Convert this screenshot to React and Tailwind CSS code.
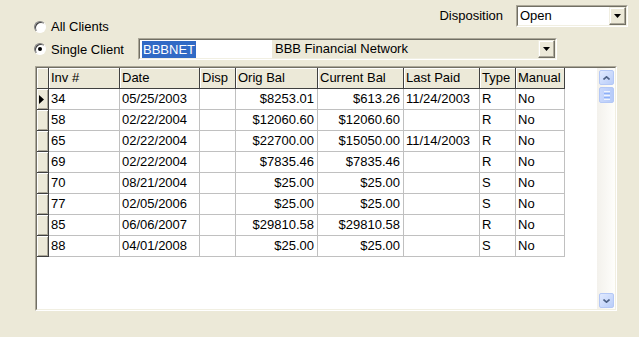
import React from 'react'

const cols = [
  { key: 'inv', label: 'Inv #', w: 'w-[71px]', align: 'left' },
  { key: 'date', label: 'Date', w: 'w-[80px]', align: 'left' },
  { key: 'disp', label: 'Disp', w: 'w-[36px]', align: 'left' },
  { key: 'orig', label: 'Orig Bal', w: 'w-[82px]', align: 'right' },
  { key: 'cur', label: 'Current Bal', w: 'w-[86px]', align: 'right' },
  { key: 'paid', label: 'Last Paid', w: 'w-[76px]', align: 'left' },
  { key: 'type', label: 'Type', w: 'w-[36px]', align: 'left' },
  { key: 'manual', label: 'Manual', w: 'w-[49px]', align: 'left' },
]

const rows = [
  { inv: '34', date: '05/25/2003', disp: '', orig: '$8253.01', cur: '$613.26', paid: '11/24/2003', type: 'R', manual: 'No' },
  { inv: '58', date: '02/22/2004', disp: '', orig: '$12060.60', cur: '$12060.60', paid: '', type: 'R', manual: 'No' },
  { inv: '65', date: '02/22/2004', disp: '', orig: '$22700.00', cur: '$15050.00', paid: '11/14/2003', type: 'R', manual: 'No' },
  { inv: '69', date: '02/22/2004', disp: '', orig: '$7835.46', cur: '$7835.46', paid: '', type: 'R', manual: 'No' },
  { inv: '70', date: '08/21/2004', disp: '', orig: '$25.00', cur: '$25.00', paid: '', type: 'S', manual: 'No' },
  { inv: '77', date: '02/05/2006', disp: '', orig: '$25.00', cur: '$25.00', paid: '', type: 'S', manual: 'No' },
  { inv: '85', date: '06/06/2007', disp: '', orig: '$29810.58', cur: '$29810.58', paid: '', type: 'R', manual: 'No' },
  { inv: '88', date: '04/01/2008', disp: '', orig: '$25.00', cur: '$25.00', paid: '', type: 'S', manual: 'No' },
]

function Radio({ checked, label }) {
  return (
    <div className="flex items-center h-[13px]">
      <div className="w-[12px] h-[12px] rounded-full border border-t-[#808080] border-l-[#808080] border-r-white border-b-white bg-white flex items-center justify-center shadow-[inset_1px_1px_0_#404040]">
        {checked && <div className="w-[4px] h-[4px] rounded-full bg-black" />}
      </div>
      <span className="ml-[5px] leading-[13px]">{label}</span>
    </div>
  )
}

// classic raised dropdown button
function DropBtn() {
  return (
    <div className="w-[17px] h-[18px] bg-[#ECE9D8] border border-t-[#F1EFE2] border-l-[#F1EFE2] border-r-[#716F64] border-b-[#716F64] shadow-[inset_-1px_-1px_0_#ACA899,inset_1px_1px_0_#fff] flex items-center justify-center">
      <svg width="7" height="4" viewBox="0 0 7 4">
        <path d="M0 0h7L3.5 4z" fill="#000" />
      </svg>
    </div>
  )
}

function Sunken({ className, children }) {
  return (
    <div className={`border border-t-[#ACA899] border-l-[#ACA899] border-r-white border-b-white ${className}`}>
      <div className="w-full h-full border border-t-[#716F64] border-l-[#716F64] border-r-[#F1EFE2] border-b-[#F1EFE2]">
        {children}
      </div>
    </div>
  )
}

function ScrollBtn({ dir }) {
  return (
    <div className="w-[15px] h-[15px] rounded-[2px] border border-[#B4C8F6] bg-gradient-to-br from-[#E1EAFE] to-[#B9CDF9] flex items-center justify-center">
      <svg width="7" height="4" viewBox="0 0 7 4">
        {dir === 'up'
          ? <path d="M0.5 3.5L3.5 0.8L6.5 3.5" stroke="#4D6185" strokeWidth="1.6" fill="none" />
          : <path d="M0.5 0.5L3.5 3.2L6.5 0.5" stroke="#4D6185" strokeWidth="1.6" fill="none" />}
      </svg>
    </div>
  )
}

export default function App() {
  return (
    <div className="w-[639px] h-[337px] bg-[#ECE9D8] text-black text-[13px] pt-[5px] overflow-hidden" style={{ fontFamily: '"Liberation Sans", Arial, sans-serif' }}>
      {/* top row: All Clients + Disposition */}
      <div className="flex h-[28px]">
        <div className="self-end pl-[34px]">
          <Radio label="All Clients" />
        </div>
        <div className="ml-auto flex items-center h-[22px] pr-[11px]">
          <span className="mr-[13px]">Disposition</span>
          <Sunken className="w-[112px] h-[22px] bg-white">
            <div className="flex items-center h-full bg-white">
              <span className="pl-[2px] flex-1">Open</span>
              <DropBtn />
            </div>
          </Sunken>
        </div>
      </div>

      {/* single client row */}
      <div className="flex items-center h-[22px] mt-[5px]">
        <div className="pl-[34px] w-[138px]">
          <Radio checked label="Single Client" />
        </div>
        <Sunken className="w-[419px] h-[22px]">
          <div className="flex h-full">
            <div className="w-[132px] bg-white flex items-center pl-[2px]">
              <span className="bg-[#316AC5] text-white px-[1px] leading-[17px]">BBBNET</span>
            </div>
            <div className="flex-1 flex items-center pl-[3px] bg-[#ECE9D8]">BBB Financial Network</div>
            <DropBtn />
          </div>
        </Sunken>
      </div>

      {/* grid */}
      <Sunken className="ml-[35px] mt-[6px] w-[582px] h-[245px] bg-white">
        <div className="flex h-full bg-white">
          <div className="flex-1">
            {/* header */}
            <div className="flex h-[21px]">
              <div className="w-[12px] h-full bg-[#ECE9D8] border-r border-b border-[#404040] shadow-[inset_1px_1px_0_#fff]" />
              {cols.map((c) => (
                <div key={c.key} className={`${c.w} h-full bg-[#ECE9D8] border-r border-b border-[#404040] shadow-[inset_1px_1px_0_#fff] pl-[2px] leading-[20px] whitespace-nowrap overflow-hidden`}>
                  {c.label}
                </div>
              ))}
            </div>
            {rows.map((r, i) => (
              <div key={r.inv} className="flex h-[21px]">
                <div className="w-[12px] h-full bg-[#ECE9D8] border-r border-b border-[#404040] shadow-[inset_1px_1px_0_#fff,inset_-1px_-1px_0_#ACA899] flex items-center pl-[2px]">
                  {i === 0 && (
                    <svg width="5" height="9" viewBox="0 0 5 9">
                      <path d="M0 0L5 4.5L0 9z" fill="#000" />
                    </svg>
                  )}
                </div>
                {cols.map((c) => (
                  <div key={c.key} className={`${c.w} h-full border-r border-b border-[#C0C0C0] leading-[20px] whitespace-nowrap overflow-hidden ${c.align === 'right' ? 'text-right pr-[3px]' : 'pl-[2px]'}`}>
                    {r[c.key]}
                  </div>
                ))}
              </div>
            ))}
          </div>
          {/* scrollbar */}
          <div className="w-[18px] h-full bg-gradient-to-r from-[#F3F1EC] to-[#FEFEFB] flex flex-col items-end pr-[1px] pt-[2px] pb-[1px]">
            <ScrollBtn dir="up" />
            <div className="w-[15px] h-[16px] mt-[2px] rounded-[2px] border border-[#B4C8F6] bg-gradient-to-r from-[#C9D8FC] to-[#B6CBF9] flex flex-col items-center justify-center gap-[1px]">
              <div className="w-[6px] h-[1px] bg-[#EEF4FE]" />
              <div className="w-[6px] h-[1px] bg-[#8CB0F8]" />
              <div className="w-[6px] h-[1px] bg-[#EEF4FE]" />
              <div className="w-[6px] h-[1px] bg-[#8CB0F8]" />
              <div className="w-[6px] h-[1px] bg-[#EEF4FE]" />
            </div>
            <div className="flex-1" />
            <ScrollBtn dir="down" />
          </div>
        </div>
      </Sunken>
    </div>
  )
}
